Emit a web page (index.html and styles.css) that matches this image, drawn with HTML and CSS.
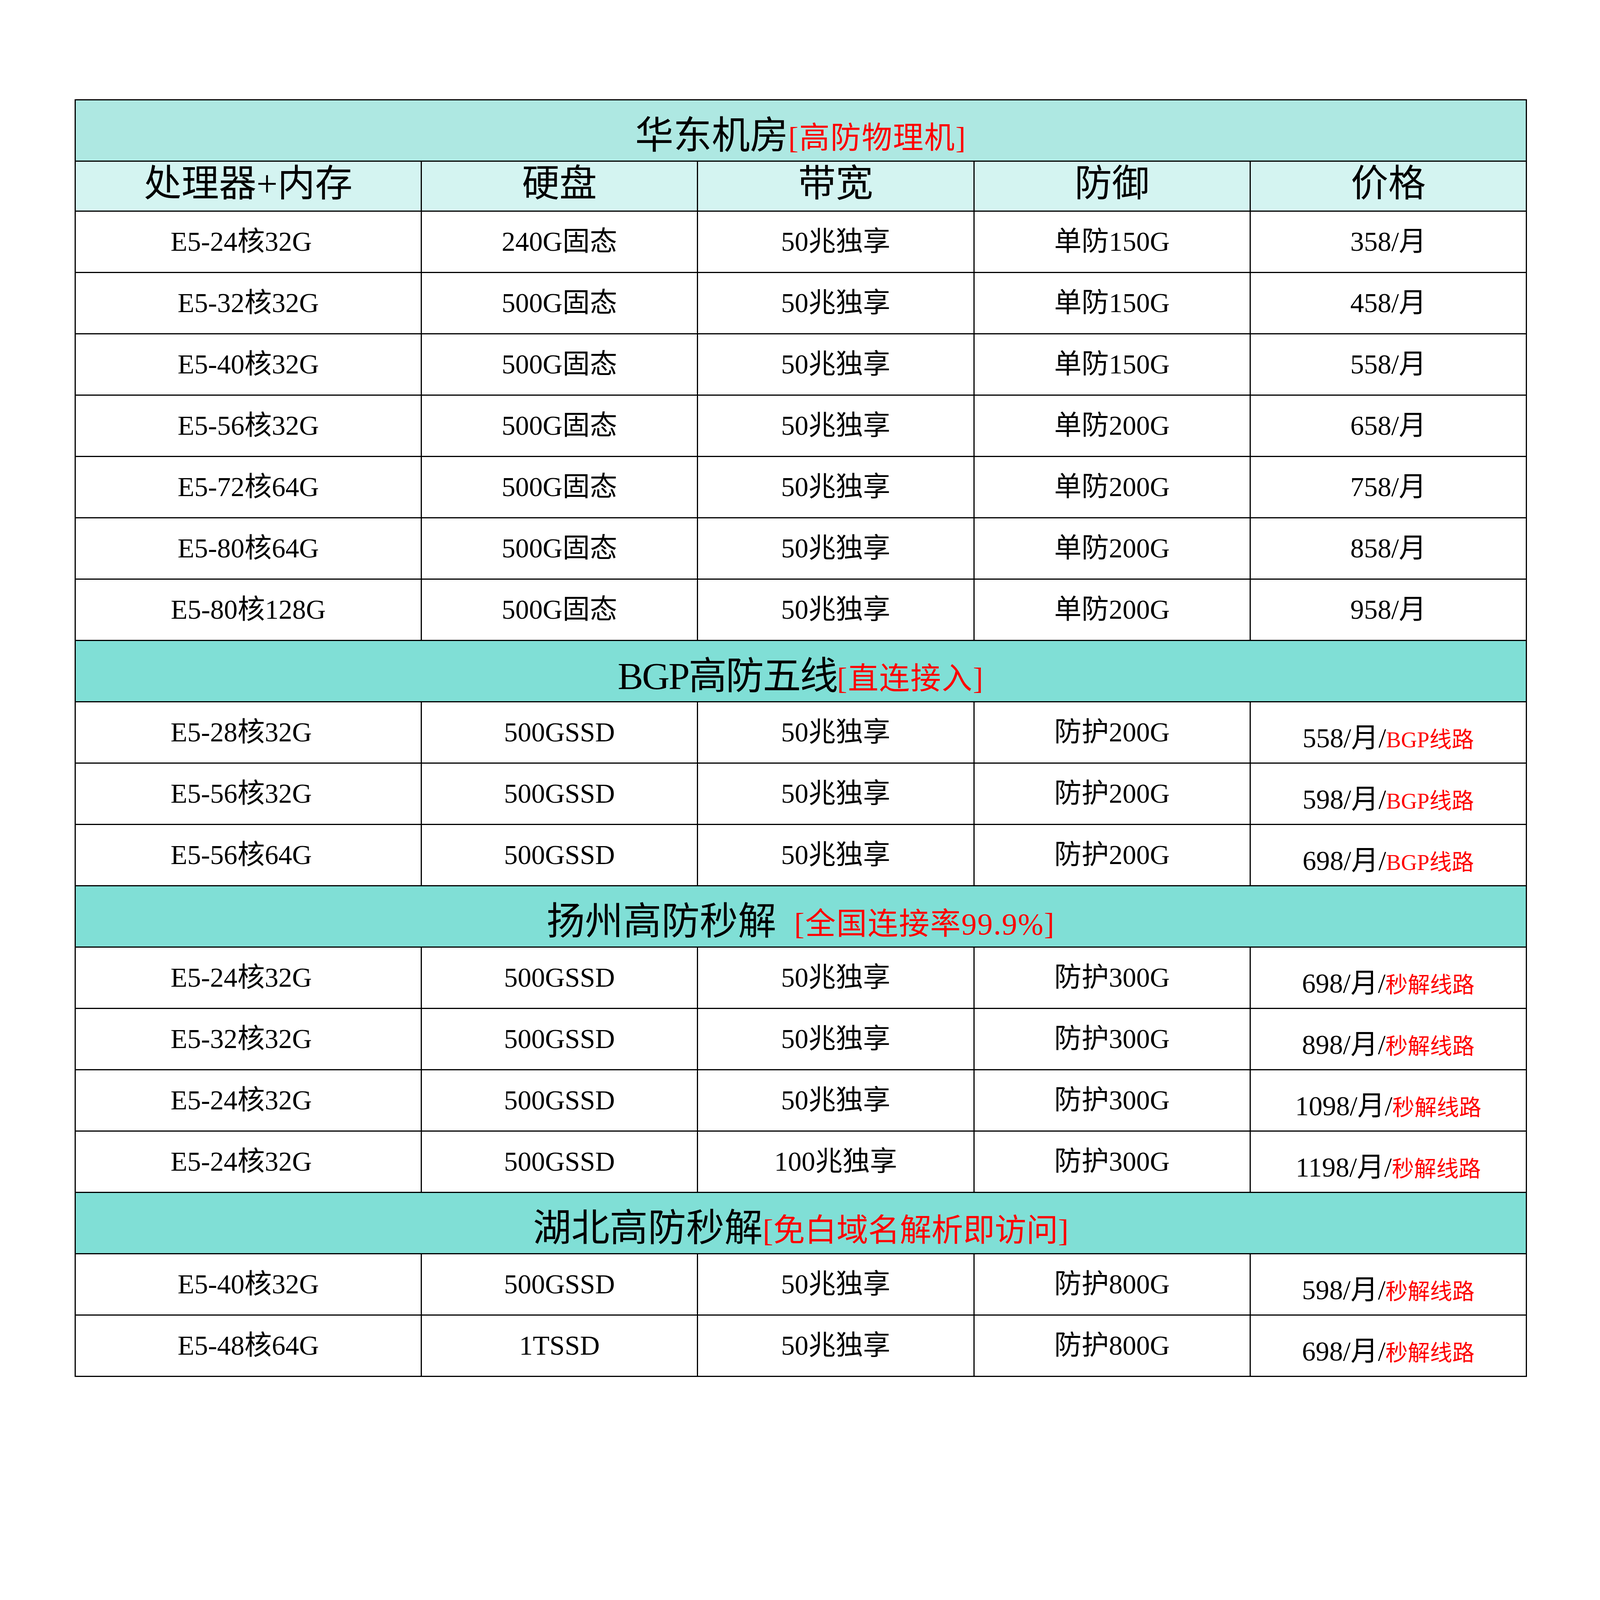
FILE: index.html
```html
<!DOCTYPE html>
<html lang="zh-CN">
<head>
<meta charset="utf-8">
<title>服务器价格表</title>
<link rel="stylesheet" href="styles.css">
</head>
<body>
<table class="price-table">
  <colgroup>
    <col class="col-cpu">
    <col class="col-std">
    <col class="col-std">
    <col class="col-std">
    <col class="col-std">
  </colgroup>
  <tbody>
    <tr class="title-row">
      <td colspan="5"><span class="title-main">华东机房</span><span class="title-note">[高防物理机]</span></td>
    </tr>
    <tr class="head-row">
      <th>处理器+内存</th><th>硬盘</th><th>带宽</th><th>防御</th><th>价格</th>
    </tr>
    <tr class="data-row"><td class="pad-r">E5-24核32G</td><td>240G固态</td><td>50兆独享</td><td>单防150G</td><td>358/月</td></tr>
    <tr class="data-row"><td>E5-32核32G</td><td>500G固态</td><td>50兆独享</td><td>单防150G</td><td>458/月</td></tr>
    <tr class="data-row"><td>E5-40核32G</td><td>500G固态</td><td>50兆独享</td><td>单防150G</td><td>558/月</td></tr>
    <tr class="data-row"><td>E5-56核32G</td><td>500G固态</td><td>50兆独享</td><td>单防200G</td><td>658/月</td></tr>
    <tr class="data-row"><td>E5-72核64G</td><td>500G固态</td><td>50兆独享</td><td>单防200G</td><td>758/月</td></tr>
    <tr class="data-row"><td>E5-80核64G</td><td>500G固态</td><td>50兆独享</td><td>单防200G</td><td>858/月</td></tr>
    <tr class="data-row"><td>E5-80核128G</td><td>500G固态</td><td>50兆独享</td><td>单防200G</td><td>958/月</td></tr>

    <tr class="section-row">
      <td colspan="5"><span class="title-main narrow">BGP高防五线</span><span class="title-note">[直连接入]</span></td>
    </tr>
    <tr class="data-row"><td class="pad-r">E5-28核32G</td><td>500GSSD</td><td>50兆独享</td><td>防护200G</td><td class="price">558/月/<span class="line-note">BGP线路</span></td></tr>
    <tr class="data-row"><td class="pad-r">E5-56核32G</td><td>500GSSD</td><td>50兆独享</td><td>防护200G</td><td class="price">598/月/<span class="line-note">BGP线路</span></td></tr>
    <tr class="data-row"><td class="pad-r">E5-56核64G</td><td>500GSSD</td><td>50兆独享</td><td>防护200G</td><td class="price">698/月/<span class="line-note">BGP线路</span></td></tr>

    <tr class="section-row">
      <td colspan="5"><span class="title-main">扬州高防秒解</span><span class="title-note gap">[全国连接率99.9%]</span></td>
    </tr>
    <tr class="data-row"><td class="pad-r">E5-24核32G</td><td>500GSSD</td><td>50兆独享</td><td>防护300G</td><td class="price">698/月/<span class="line-note">秒解线路</span></td></tr>
    <tr class="data-row"><td class="pad-r">E5-32核32G</td><td>500GSSD</td><td>50兆独享</td><td>防护300G</td><td class="price">898/月/<span class="line-note">秒解线路</span></td></tr>
    <tr class="data-row"><td class="pad-r">E5-24核32G</td><td>500GSSD</td><td>50兆独享</td><td>防护300G</td><td class="price">1098/月/<span class="line-note">秒解线路</span></td></tr>
    <tr class="data-row"><td class="pad-r">E5-24核32G</td><td>500GSSD</td><td>100兆独享</td><td>防护300G</td><td class="price">1198/月/<span class="line-note">秒解线路</span></td></tr>

    <tr class="section-row">
      <td colspan="5"><span class="title-main">湖北高防秒解</span><span class="title-note large">[免白域名解析即访问]</span></td>
    </tr>
    <tr class="data-row"><td>E5-40核32G</td><td>500GSSD</td><td>50兆独享</td><td>防护800G</td><td class="price">598/月/<span class="line-note">秒解线路</span></td></tr>
    <tr class="data-row"><td>E5-48核64G</td><td>1TSSD</td><td>50兆独享</td><td>防护800G</td><td class="price">698/月/<span class="line-note">秒解线路</span></td></tr>
  </tbody>
</table>
</body>
</html>
```

FILE: styles.css
```css
html, body {
  margin: 0;
  padding: 0;
  background: #ffffff;
}

body {
  padding: 254px 0 0 191px;
  font-family: "Liberation Serif", "Noto Sans CJK SC", serif;
  color: #000000;
}

.price-table {
  border-collapse: collapse;
  table-layout: fixed;
  width: 3715px;
}

.col-cpu { width: 886px; }
.col-std { width: 707.25px; }

.price-table td,
.price-table th {
  border: 3px solid #000000;
  padding: 0;
  text-align: center;
  vertical-align: middle;
  white-space: nowrap;
  line-height: 1;
  font-weight: normal;
}

.title-row td {
  height: 157px;
  background: #aee8e2;
  padding-top: 26px;
  box-sizing: border-box;
}

.section-row td {
  height: 157px;
  background: #80dfd6;
  padding-top: 26px;
  box-sizing: border-box;
}

.title-main {
  font-size: 98px;
}

.title-main.narrow {
  letter-spacing: -3px;
}

.title-note {
  font-size: 78px;
  letter-spacing: 2px;
  color: #ff0000;
}

.title-note.gap {
  margin-left: 46px;
}

.title-note.large {
  font-size: 81px;
  letter-spacing: 0;
}

.head-row th {
  height: 128px;
  background: #d4f4f1;
  font-size: 96px;
  padding-bottom: 14px;
  box-sizing: border-box;
}

.data-row td {
  height: 157px;
  font-size: 70px;
  background: #ffffff;
  box-sizing: border-box;
}

.data-row td.pad-r {
  padding-right: 36px;
}

.data-row td.price {
  padding-top: 29px;
}

.line-note {
  font-size: 57px;
  color: #ff0000;
}
```
